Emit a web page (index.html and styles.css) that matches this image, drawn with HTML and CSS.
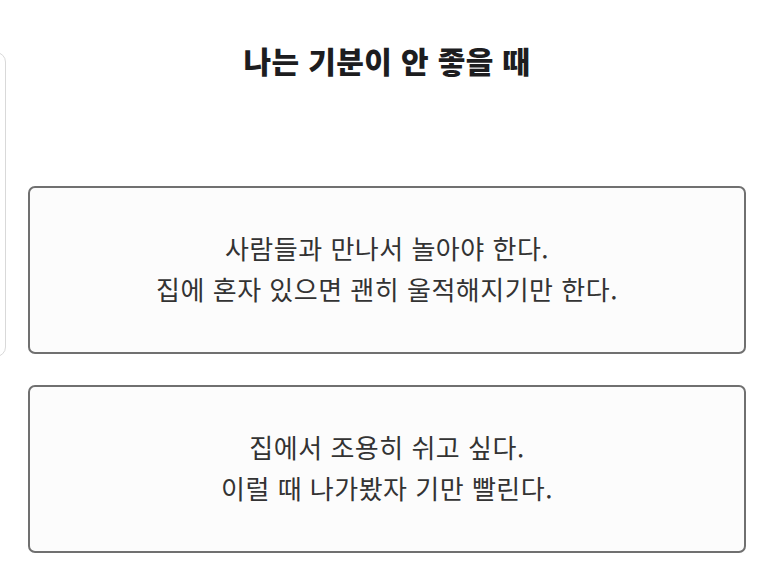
FILE: index.html
```html
<!DOCTYPE html>
<html lang="ko">
<head>
<meta charset="utf-8">
<link rel="stylesheet" href="styles.css">
</head>
<body>
<div class="track">
  <div class="prev-slide"></div>
  <section class="slide">
    <h1 class="title">나는 기분이 안 좋을 때</h1>
    <div class="options">
      <button class="option">사람들과 만나서 놀아야 한다.<br>집에 혼자 있으면 괜히 울적해지기만 한다.</button>
      <button class="option">집에서 조용히 쉬고 싶다.<br>이럴 때 나가봤자 기만 빨린다.</button>
    </div>
  </section>
</div>
</body>
</html>
```

FILE: styles.css
```css
html, body {
  margin: 0;
  padding: 0;
  background: #ffffff;
}
body {
  width: 773px;
  height: 572px;
  overflow: hidden;
  font-family: "Noto Sans CJK KR", "Noto Sans", sans-serif;
}
.track {
  display: flex;
  align-items: flex-start;
}
.prev-slide {
  flex: none;
  width: 300px;
  height: 305px;
  margin-top: 52px;
  margin-left: -294px;
  border: 1.5px solid #d9d9d9;
  border-radius: 10px;
  box-sizing: border-box;
}
.slide {
  flex: none;
  width: 718px;
  margin-left: 22px;
  display: flex;
  flex-direction: column;
}
.title {
  margin: 38px 0 0;
  height: 44px;
  font-size: 30px;
  line-height: 44px;
  font-weight: 800;
  color: #1d1d1f;
  text-align: center;
  letter-spacing: 0.4px;
}
.options {
  margin-top: 104px;
  display: flex;
  flex-direction: column;
  gap: 31px;
}
.option {
  height: 168px;
  box-sizing: border-box;
  border: 2px solid #707070;
  border-radius: 7px;
  background: #fcfcfc;
  font-family: inherit;
  font-size: 26px;
  line-height: 41px;
  color: #333333;
  text-align: center;
  padding: 0 0 5px;
  letter-spacing: 0.5px;
}
```
